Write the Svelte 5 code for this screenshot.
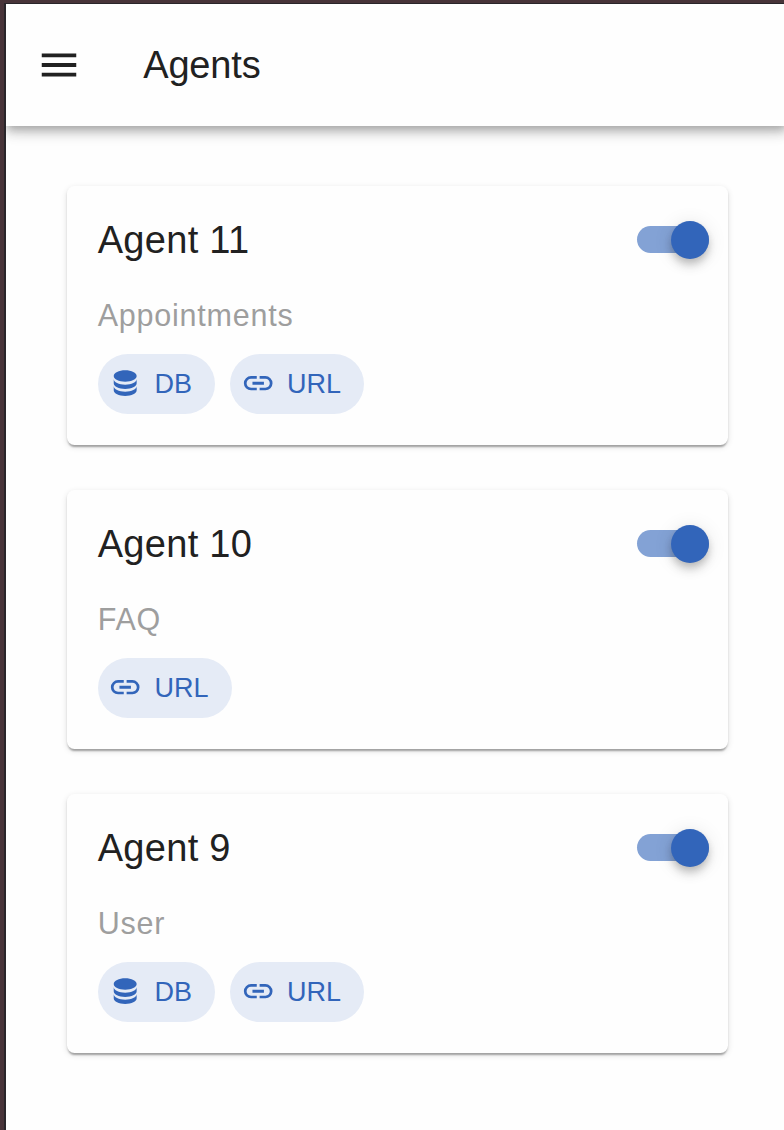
<script>
  const icons = {
    menu: 'M3,6H21V8H3V6M3,11H21V13H3V11M3,16H21V18H3V16Z',
    DB: 'M12,3C7.58,3 4,4.79 4,7C4,9.21 7.58,11 12,11C16.42,11 20,9.21 20,7C20,4.79 16.42,3 12,3M4,9V12C4,14.21 7.58,16 12,16C16.42,16 20,14.21 20,12V9C20,11.21 16.42,13 12,13C7.58,13 4,11.21 4,9M4,14V17C4,19.21 7.58,21 12,21C16.42,21 20,19.21 20,17V14C20,16.21 16.42,18 12,18C7.58,18 4,16.21 4,14Z',
    URL: 'M3.9,12C3.9,10.29 5.29,8.9 7,8.9H11V7H7A5,5 0 0,0 2,12A5,5 0 0,0 7,17H11V15.1H7C5.29,15.1 3.9,13.71 3.9,12M8,13H16V11H8V13M17,7H13V8.9H17C18.71,8.9 20.1,10.29 20.1,12C20.1,13.71 18.71,15.1 17,15.1H13V17H17A5,5 0 0,0 22,12A5,5 0 0,0 17,7Z',
  };

  let agents = $state([
    { name: 'Agent 11', topic: 'Appointments', sources: ['DB', 'URL'], active: true },
    { name: 'Agent 10', topic: 'FAQ', sources: ['URL'], active: true },
    { name: 'Agent 9', topic: 'User', sources: ['DB', 'URL'], active: true },
  ]);
</script>

<div class="desktop">
  <div class="window">
    <header>
      <button class="menu" aria-label="Menu">
        <svg viewBox="0 0 24 24"><path d={icons.menu} /></svg>
      </button>
      <h1>Agents</h1>
    </header>
    <main>
      {#each agents as agent}
        <article>
          <div class="top">
            <h2>{agent.name}</h2>
            <button
              class="switch"
              class:on={agent.active}
              role="switch"
              aria-checked={agent.active}
              aria-label={agent.name}
              onclick={() => (agent.active = !agent.active)}
            >
              <span class="thumb"></span>
            </button>
          </div>
          <p>{agent.topic}</p>
          <div class="chips">
            {#each agent.sources as source}
              <span class="chip {source.toLowerCase()}">
                <svg viewBox="0 0 24 24"><path d={icons[source]} /></svg>
                <span class="label">{source}</span>
              </span>
            {/each}
          </div>
        </article>
      {/each}
    </main>
  </div>
</div>

<style>
  :global(body) {
    overflow: hidden;
  }
  .desktop {
    box-sizing: border-box;
    height: 1130px;
    padding: 3px 0 0 4px;
    background: #483439;
    font-family: 'Liberation Sans', Arial, sans-serif;
    color: #212121;
  }
  .window {
    box-sizing: border-box;
    height: 100%;
    border-left: 2px solid #29252a;
    border-top: 1px solid #29252a;
    background: #fefefe;
    overflow: hidden;
  }
  button {
    border: 0;
    padding: 0;
    background: none;
    color: inherit;
  }
  svg {
    display: block;
    fill: currentColor;
  }
  h1,
  h2,
  p {
    margin: 0;
    font-weight: 400;
    white-space: nowrap;
  }
  header {
    display: flex;
    align-items: center;
    height: 121.5px;
    margin-right: -3px;
    padding-left: 30.4px;
    background: #fefefe;
    box-shadow:
      0 4px 8px -2px rgba(0, 0, 0, 0.2),
      0 8px 10px rgba(0, 0, 0, 0.14),
      0 2px 19px rgba(0, 0, 0, 0.12);
  }
  .menu svg {
    width: 46px;
    height: 46px;
  }
  h1 {
    padding-top: 1px;
    margin-left: 60.8px;
    font-size: 38px;
    line-height: 60px;
    letter-spacing: -0.15px;
  }
  main {
    display: flex;
    flex-direction: column;
    gap: 45px;
    padding: 60.5px 56px 0 61px;
  }
  article {
    box-sizing: border-box;
    height: 259px;
    padding: 23.5px 19px 0 30.7px;
    border-radius: 7.5px;
    background: #fefefe;
    box-shadow:
      0 4px 2px -2px rgba(0, 0, 0, 0.2),
      0 2px 2px rgba(0, 0, 0, 0.14),
      0 2px 6px rgba(0, 0, 0, 0.12);
  }
  .top {
    display: flex;
    align-items: center;
    justify-content: space-between;
    height: 60px;
  }
  h2 {
    padding-top: 2px;
    font-size: 38px;
    letter-spacing: 0.3px;
  }
  .switch {
    display: flex;
    align-items: center;
    width: 72px;
    height: 27px;
    border-radius: 14px;
    background: #bbb;
  }
  .switch.on {
    justify-content: flex-end;
    background: #83a2d5;
  }
  .thumb {
    flex: none;
    width: 38px;
    height: 38px;
    border-radius: 50%;
    background: #3265ba;
    box-shadow:
      0 4px 8px -2px rgba(0, 0, 0, 0.2),
      0 8px 10px rgba(0, 0, 0, 0.1),
      0 2px 19px rgba(0, 0, 0, 0.1);
  }
  p {
    margin-top: 25px;
    font-size: 30.5px;
    line-height: 40px;
    letter-spacing: 0.78px;
    color: #9e9e9e;
  }
  .chips {
    display: flex;
    gap: 15.5px;
    margin-top: 19px;
  }
  .chip {
    box-sizing: border-box;
    display: flex;
    align-items: center;
    height: 60px;
    padding-left: 10.8px;
    border-radius: 30px;
    background: #e5ebf6;
    color: #3265ba;
  }
  .chip.db {
    width: 117px;
  }
  .chip.url {
    width: 134px;
  }
  .chip svg {
    width: 34.4px;
    height: 34.4px;
    margin-bottom: 1.2px;
  }
  .label {
    padding-top: 1.5px;
    margin-left: 11.7px;
    font-size: 27px;
  }
</style>
